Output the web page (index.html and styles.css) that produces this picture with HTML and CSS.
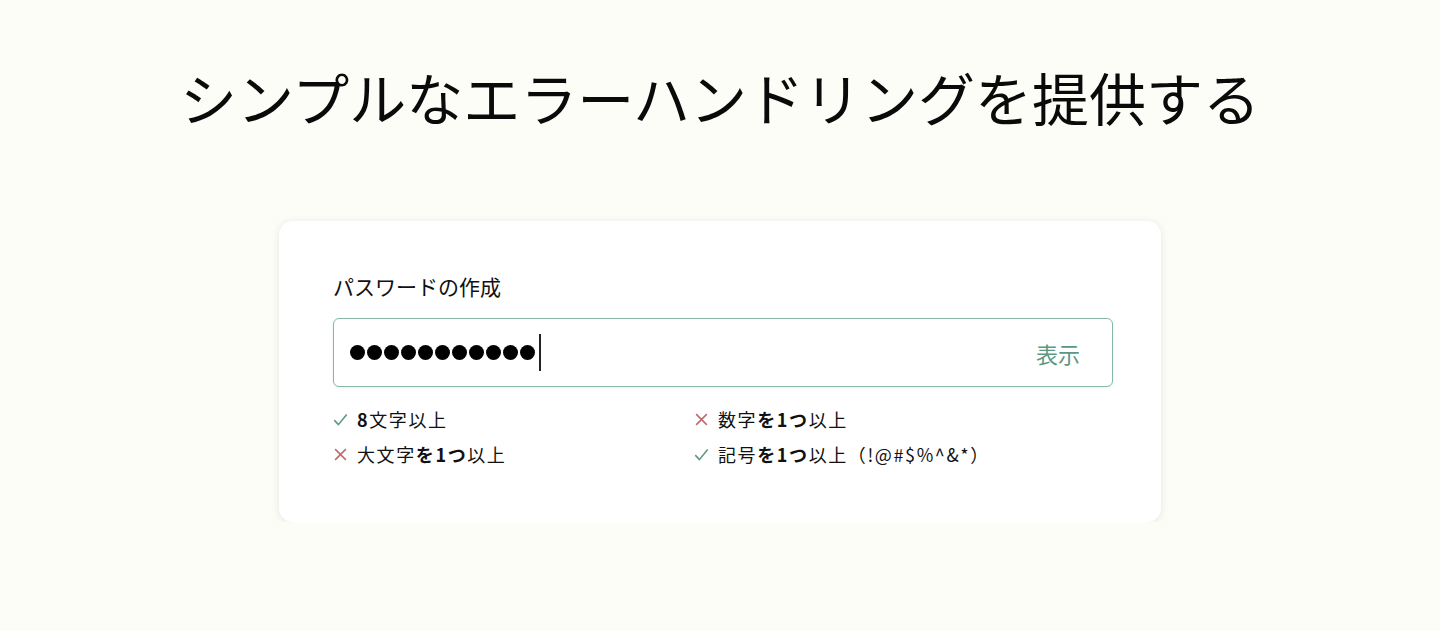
FILE: index.html
```html
<!DOCTYPE html>
<html lang="ja">
<head>
<meta charset="utf-8">
<title>シンプルなエラーハンドリング</title>
<link rel="stylesheet" href="styles.css">
</head>
<body>
<main class="page">
  <h1 class="title">シンプルなエラーハンドリングを提供する</h1>
  <section class="card">
    <label class="label">パスワードの作成</label>
    <div class="field">
      <div class="value">
        <span class="dots">
          <i></i><i></i><i></i><i></i><i></i><i></i><i></i><i></i><i></i><i></i><i></i>
        </span>
        <span class="caret"></span>
      </div>
      <button class="toggle" type="button">表示</button>
    </div>
    <ul class="rules">
      <li class="rule ok">
        <svg class="icon" viewBox="0 0 14 14"><path d="M1.2 7.6 L5 11.8 L12.8 2.4"/></svg>
        <span><b>8</b>文字以上</span>
      </li>
      <li class="rule ng">
        <svg class="icon" viewBox="0 0 14 14"><path d="M2 2 L12 12 M12 2 L2 12"/></svg>
        <span>数字<b>を1つ</b>以上</span>
      </li>
      <li class="rule ng">
        <svg class="icon" viewBox="0 0 14 14"><path d="M2 2 L12 12 M12 2 L2 12"/></svg>
        <span>大文字<b>を1つ</b>以上</span>
      </li>
      <li class="rule ok">
        <svg class="icon" viewBox="0 0 14 14"><path d="M1.2 7.6 L5 11.8 L12.8 2.4"/></svg>
        <span>記号<b>を1つ</b>以上（!@#$%^&amp;*）</span>
      </li>
    </ul>
  </section>
</main>
</body>
</html>
```
FILE: styles.css
```css
* { box-sizing: border-box; }
html, body {
  margin: 0;
  padding: 0;
  background: #fdfdf8;
  font-family: "Noto Sans CJK JP", "Noto Sans", sans-serif;
  color: #111;
}
.page {
  display: flex;
  flex-direction: column;
  align-items: center;
  padding-top: 60px;
}
.title {
  margin: 0;
  font-size: 57px;
  line-height: 72px;
  font-weight: 400;
  color: #0a0a0a;
}
.card {
  margin-top: 89px;
  width: 882px;
  background: #fff;
  border-radius: 14px;
  box-shadow: 0 1px 8px rgba(0, 0, 0, 0.09);
  padding: 50px 48px 50px 54px;
}
.label {
  display: block;
  font-size: 21px;
  line-height: 30px;
  color: #111;
}
.field {
  margin-top: 17px;
  width: 780px;
  height: 69px;
  border: 1px solid #86b8a4;
  border-radius: 6px;
  display: flex;
  align-items: center;
  justify-content: space-between;
  padding: 0 32px 0 16px;
  box-shadow: 0 1px 3px rgba(90, 150, 120, 0.12);
}
.value {
  display: flex;
  align-items: center;
  gap: 2px;
}
.dots {
  display: flex;
  gap: 2px;
}
.dots i {
  display: block;
  width: 15px;
  height: 15px;
  border-radius: 50%;
  background: #000;
}
.caret {
  display: block;
  width: 2px;
  height: 37px;
  background: #222;
  margin-left: 2px;
}
.toggle {
  border: 0;
  background: none;
  padding: 0;
  font-family: inherit;
  font-size: 22px;
  color: #5c9883;
  cursor: pointer;
}
.rules {
  list-style: none;
  margin: 15px 0 0;
  padding: 0;
  display: grid;
  grid-template-columns: 361px 1fr;
}
.rule {
  display: flex;
  align-items: center;
  gap: 9px;
  font-size: 18px;
  line-height: 35px;
  letter-spacing: 1.6px;
  font-weight: 400;
}
.rule b { font-weight: 700; }
.icon {
  width: 15px;
  height: 15px;
  fill: none;
  stroke-width: 1.5;
  flex: none;
}
.ok .icon { stroke: #5c9883; }
.ng .icon { stroke: #c46a6a; }
```
